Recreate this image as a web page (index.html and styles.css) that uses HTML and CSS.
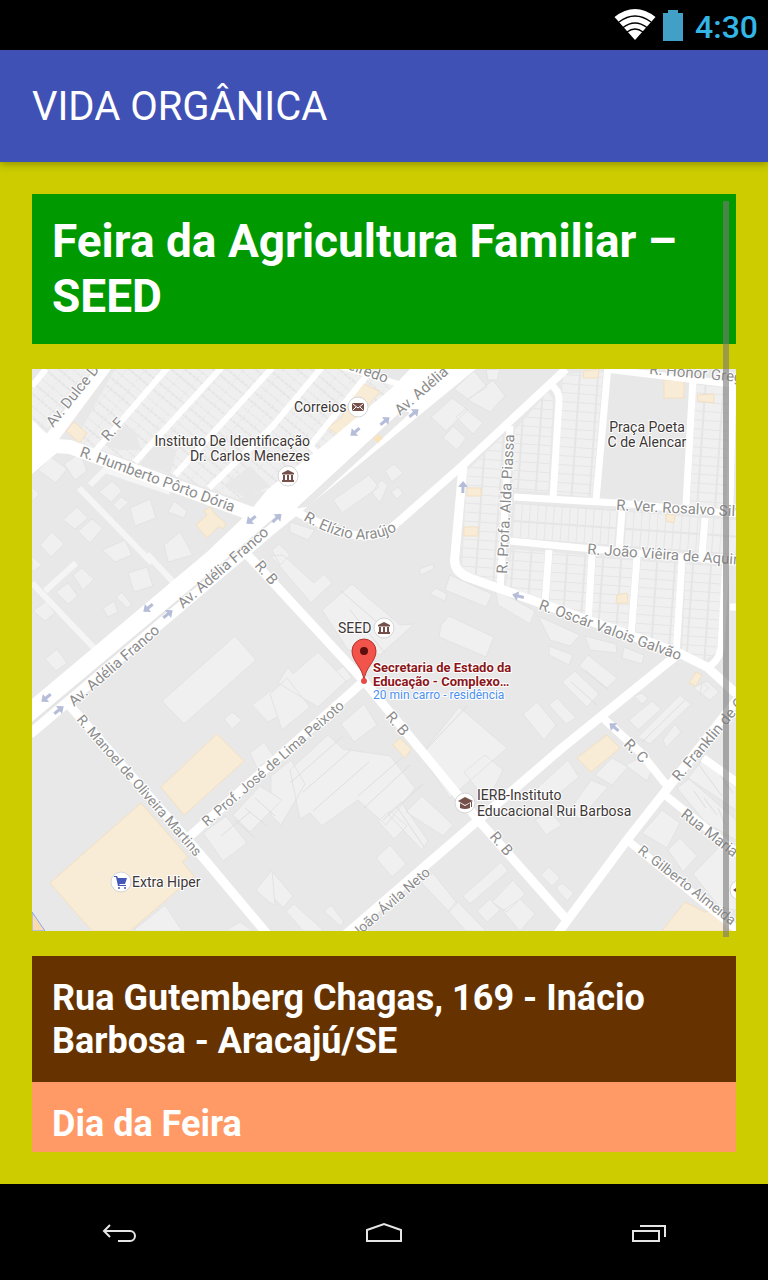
FILE: index.html
```html
<!DOCTYPE html>
<html lang="pt-BR">
<head>
<meta charset="utf-8">
<meta name="viewport" content="width=device-width, initial-scale=1">
<title>Vida Orgânica</title>
<link rel="stylesheet" href="styles.css">
</head>
<body>
<div class="status">
  <svg class="status-wifi" viewBox="0 0 42 32" aria-label="Wi-Fi">
    <path d="M21 31 0.500 8Q21-8 41.500 8Z" fill="#fff"/>
    <g fill="none" stroke="#000" stroke-width="1.500"><path d="M5 13Q21 1 37 13"/><path d="M9 18.500Q21 9.500 33 18.500"/><path d="M13 23Q21 17 29 23"/></g>
  </svg>
  <svg class="status-battery" viewBox="0 0 20 31" aria-label="Bateria"><path d="M0 3H5V0H15V3H20V31H0Z" fill="#429fc6"/></svg>
  <time class="status-time">4:30</time>
</div>
<header class="appbar"><h1 class="appbar-title">VIDA ORGÂNICA</h1></header>
<main class="page">
  <div class="scroller">
    <h2 class="fair-name">Feira da Agricultura Familiar – SEED</h2>
    <svg class="map" viewBox="32 369 704 562" role="img" aria-label="Mapa da feira">
      <defs>
        <pattern id="lots-nw" width="15" height="27" patternUnits="userSpaceOnUse" patternTransform="translate(110 365) rotate(40)">
          <rect width="15" height="27" fill="#efefef"/><path d="M0 0H15M0 9H15M0 18H15" stroke="#dcdcdc" stroke-dasharray="4 1"/><path d="M0 0V27" stroke="#e2e2e2" stroke-dasharray="3 2"/>
        </pattern>
        <pattern id="lots-col" width="18" height="9" patternUnits="userSpaceOnUse" patternTransform="translate(563 374) rotate(4)">
          <rect width="18" height="9" fill="#f0f0f0"/><path d="M0 0H16" stroke="#dadada"/><path d="M17 0V9" stroke="#e5e5e5" stroke-width="2"/>
        </pattern>
        <pattern id="lots-row" width="8" height="18" patternUnits="userSpaceOnUse" patternTransform="translate(514 504) rotate(4)">
          <rect width="8" height="18" fill="#f0f0f0"/><path d="M0 0V16" stroke="#dadada"/><path d="M0 17H8" stroke="#e5e5e5" stroke-width="2"/>
        </pattern>
        <path id="way" d="M-6-1.500H0V-5L6 0 0 5V1.500H-6Z" fill="#b6bdd8"/>
        <g id="museum" fill="#75504b"><path d="M-6-3 0-6 6-3V-1.500H-6ZM-5-1H-3V4H-5ZM-1-1H1V4H-1ZM3-1H5V4H3ZM-6 4H6V6H-6Z"/></g>
        <path id="elizio" d="M303 520Q357 552 396 531"/>
      </defs>
      <rect x="32" y="369" width="704" height="562" fill="#e8e8e8"/>
      <g fill="url(#lots-nw)"><path d="M32 382 44 369H92L48 429 32 423ZM115 369H350L398 384 268 490 238 499 75 441Z"/></g>
      <path d="M115 423 135 430 141 450 118 450 104 443ZM225 485 250 466 270 486 245 498ZM140 464 156 440 177 450 170 474Z" fill="#e8e8e8"/>
      <g fill="url(#lots-col)">
        <path d="M563 374 603 372 592 497 557 494ZM515 430 548 392 553 400 548 492 513 490ZM696 385 731 388 727 508 690 505ZM467 471 505 434 498 582 462 570ZM512 549 545 552 541 598 506 586ZM553 552 588 556 585 620 549 605ZM596 557 633 560 627 630 592 620ZM641 561 678 563 673 648 635 636ZM686 563 723 566 717 652 705 660 682 652Z"/>
      </g>
      <g fill="url(#lots-row)"><path d="M514 503 617 509 614 545 512 537ZM626 511 700 518 698 551 623 548ZM709 518 736 520V556L706 553Z"/></g>
      <g fill="#f0f0f0" stroke="#e3e3e3" stroke-width="1">
        <path d="M38 470 51 457 67 469 56 483ZM64 464 80 453 87 471 75 480ZM32 487 39 494 32 502ZM99 492 112 481 122 491 111 502ZM113 505 121 497 129 502 119 511ZM130 508 150 499 156 518 135 526ZM168 512 174 501 187 511 184 518ZM63 520 77 507 88 518 75 529ZM78 531 92 519 103 528 90 543ZM40 545 52 532 64 544 51 557ZM102 550 125 540 132 555 115 562ZM164 545 180 532 193 555 168 562ZM32 556 42 565 32 572ZM73 575 82 568 94 579 83 590ZM56 592 68 583 78 596 68 604ZM33 611 46 601 55 613 45 621ZM128 573 147 567 153 586 134 592ZM103 608 114 601 118 612 108 617ZM116 597 122 592 132 605 127 608ZM45 659 57 649 67 663 56 671ZM162 701 235 636 256 660 184 724ZM252 705 272 690 294 708 268 722ZM224 719 232 712 242 720 232 729Z"/>
        <path d="M333 500 369 475 379 487 342 513ZM372 493 381 480 388 485 380 503ZM385 471 394 464 403 473 392 482ZM391 492 398 487 403 493 397 499ZM290 522 315 530 308 540 290 532ZM272 550 279 544 290 555 280 565ZM431 417 452 398 468 410 446 431ZM456 417 466 409 483 423 473 434ZM443 438 453 426 466 438 457 450ZM454 389 474 371 487 387 468 399ZM468 400 493 380 505 396 490 412ZM486 370 500 369 497 380 488 380ZM271 556 283 555 314 583 324 574 332 583 311 603ZM322 610 352 584 400 625 414 624 380 655 370 650 348 650ZM323 680 343 666 352 678 330 690ZM441 625 449 616 494 637 486 657 439 637ZM430 594 436 588 447 594 445 601ZM445 590 450 575 492 594 486 607ZM419 569 433 564 434 569 421 575ZM495 589 535 611 530 624 498 605ZM538 616 580 635 570 646 550 640ZM549 646 573 655 569 665 549 655ZM585 636 616 644 617 653 590 650ZM624 647 644 655 642 664 622 658ZM562 682 575 671 599 694 587 707ZM579 666 588 655 617 678 607 688ZM523 714 537 702 556 725 544 740ZM549 705 557 698 576 718 566 724ZM629 720 652 701 661 709 638 730ZM634 696 642 693 648 699 642 704ZM638 737 680 695 691 704 650 744ZM663 740 675 724 681 732 666 748Z"/>
        <path d="M278 683 288 667 293 674 318 652 346 681 318 707ZM270 694 287 678 310 707 282 730ZM341 724 364 704 377 725 354 742ZM271 776 291 760 305 784 281 825 271 815ZM290 770 328 735 343 749 390 756 415 788 386 825 358 800 322 826 310 813 300 819ZM378 821 390 811 407 826 394 839ZM388 814 401 802 428 841 422 850ZM406 812 422 796 453 825 443 836ZM376 858 390 845 406 864 392 877ZM421 755 459 707 507 748 450 798ZM464 772 485 755 503 770 493 790 478 790ZM270 869 293 896 283 908 270 893ZM286 911 294 904 324 931H303ZM324 911 331 905 344 922 340 926ZM421 882 433 873 457 903 449 912ZM448 911 457 901 486 931H466ZM463 896 501 862 508 871 470 904ZM477 911 490 899 500 910 487 922ZM492 902 513 880 525 894 507 912ZM503 911 520 899 535 914 520 931ZM541 875 549 867 560 878 552 886ZM556 888 562 883 574 893 567 901Z"/>
        <path d="M537 788 568 760 579 777 550 801ZM571 808 591 780 608 787 579 820ZM595 775 612 758 628 767 612 785ZM625 765 640 758 653 768 647 781ZM642 833 662 810 680 823 667 848ZM668 850 680 838 697 856 683 872ZM693 874 724 842 736 848V910L720 908ZM677 788 689 779 736 820V840L705 822ZM688 778 705 757 736 782V810ZM535 820 550 812 562 825 546 835ZM203 833 226 816 247 843 223 861ZM233 815 260 786 282 800 250 832ZM256 890 272 870 275 905 270 903ZM135 929 165 905 182 931H136ZM225 931 240 922 253 931ZM250 753 264 742 274 757 257 768ZM702 682 709 688 700 696ZM693 688 707 681 719 692 710 700Z"/>
      </g>
      <g fill="none" stroke="#dedede"><path d="M350 610 385 653M378 623 340 590M290 783 343 736M303 792 350 751M313 811 369 762M358 796 403 757M364 808 410 765M383 820 423 784M397 807 424 847M421 755 467 706M571 682 597 705M585 670 608 690M642 742 685 700M221 836 250 812M235 820 255 838M245 808 267 826M255 798 275 816M694 791 706 808M704 798 717 815M718 808 725 824M699 765 722 796M711 762 733 793"/></g>
      <g fill="#f9ecd6" stroke="#f2dfc1">
        <path d="M66 431 74 422 87 433 80 443ZM196 525 207 515 204 511 210 507 215 514 226 524 223 529 219 526 207 538ZM328 428 341 418 354 395 364 384 380 392 340 436ZM467 488H481V496H467ZM464 527H478V536H464ZM584 371 599 369 598 378 583 378ZM664 380H684V398H664ZM697 395 714 394V403L698 401ZM666 514 675 515 674 523 666 521ZM617 595 627 593 628 603 616 603ZM689 683 696 672 702 675 696 686ZM577 758 607 735 620 748 591 772ZM393 745 400 738 411 749 405 758ZM161 787 217 734 244 761 184 815ZM50 883 141 803 188 857 182 862 194 876 130 931H92ZM662 931 685 902 705 912 710 911 728 924 732 931Z"/>
        <path d="M32 912 45 931H32Z" fill="#fadbb0" stroke="#83a7f2"/>
      </g>
      <g fill="none" stroke="#f5f5f5" stroke-width="6"><path d="M79 488 152 563M32 583 94 648M45 591 76 563M147 554 174 583M90 485 105 470 170 492"/></g>
      <g fill="none" stroke="#fff" stroke-width="7" stroke-linejoin="round">
        <path d="M32 386 46 369M92 455 168 367M135 462 222 367M175 475 272 368M209 488 272 427 322 367M320 456 310 446 368 374M340 366 402 385" stroke-width="6"/>
        <path d="M48 443 106 365" stroke-width="13"/>
        <path d="M30 444 70 447 170 484 255 515" stroke-width="14"/>
        <path d="M30 734 270 531 473 365" stroke-width="10"/>
        <path d="M288 508C330 528 368 551 397 523L463 465 566 369" stroke-width="8"/>
        <path d="M463 466 455 555Q452 572 470 578L677 652 707 667 740 697" stroke-width="9"/>
        <path d="M510 426 500 590M514 497 617 503 738 514M510 541 560 546 738 562M551 385Q559 390 559 400L553 498M608 366 596 500M693 378 686 505M606 369 738 385M622 511 619 550M705 518 702 555M549 550 545 603M592 555 588 625M637 557 631 637M682 560 676 655M726 560 721 648Q719 662 706 668M733 376 730 505M730 607H738"/>
        <path d="M677 655 562 748 345 935M740 696 667 789 627 840 555 937M243 550 364 681 480 822 566 919M70 706 200 854 268 935M190 836 364 681" stroke-width="9"/>
        <path d="M603 718 640 752 668 787M665 795 740 855M627 840 740 932M703 758 738 783" stroke-width="8"/>
      </g>
      <path d="M32 420 55 441 64 447 32 474ZM32 699 207 552 250 511 268 489 320 448 392 388 413 366H464L300 508 222 564 32 722Z" fill="#fff"/>
      <path d="M32 723 222 564 280 514M298 508 403 411" fill="none" stroke="#e5e5e5" stroke-width="2"/>
      <path d="M298 508 403 410 410 413 308 507Z" fill="#e8e8e8"/>
      <path d="M373 439 378 434 383 438 378 443Z" fill="#f9e3bd"/>

      <use href="#way" transform="translate(251 520) rotate(142)"/><use href="#way" transform="translate(277 518) rotate(-42)"/>
      <use href="#way" transform="translate(355 432) rotate(140)"/><use href="#way" transform="translate(385 421) rotate(-40)"/><use href="#way" transform="translate(414 413) rotate(-40)"/>
      <use href="#way" transform="translate(148 608) rotate(142)"/><use href="#way" transform="translate(168 614) rotate(-38)"/>
      <use href="#way" transform="translate(46 698) rotate(142)"/><use href="#way" transform="translate(59 710) rotate(-38)"/>
      <use href="#way" transform="translate(463 487) rotate(-88)"/><use href="#way" transform="translate(518 596) rotate(195)"/><use href="#way" transform="translate(614 727) rotate(220)"/>

      <g class="street">
        <text transform="translate(53 428) rotate(-51)">Av. Dulce D</text>
        <text transform="translate(108 442) rotate(-48)">R. F</text>
        <text transform="translate(79 456) rotate(20)">R. Humberto Pôrto Dória</text>
        <text transform="translate(347 369) rotate(20)">eiredo</text>
        <text transform="translate(400 416) rotate(-41)">Av. Adélia</text>
        <text><textPath href="#elizio">R. Elízio Araújo</textPath></text>
        <text transform="translate(183 609) rotate(-41)">Av. Adélia Franco</text>
        <text transform="translate(74 707) rotate(-41)">Av. Adélia Franco</text>
        <text transform="translate(254 566) rotate(49)">R. B</text>
        <text transform="translate(385 717) rotate(49)">R. B</text>
        <text transform="translate(489 837) rotate(49)">R. B</text>
        <text transform="translate(507 574) rotate(-87)">R. Profa. Alda Piassa</text>
        <text transform="translate(649 374) rotate(5)">R. Honor Grego</text>
        <text transform="translate(616 510) rotate(3)">R. Ver. Rosalvo Silva</text>
        <text transform="translate(587 554) rotate(4)">R. João Viêira de Aquino</text>
        <text transform="translate(538 609) rotate(20)">R. Oscár Valois Galvão</text>
        <text class="street-long" transform="translate(76 720) rotate(49)">R. Manoel de Oliveira Martins</text>
        <text class="street-long" transform="translate(207 827) rotate(-41)">R. Prof. José de Lima Peixoto</text>
        <text class="street-long" transform="translate(357 938) rotate(-41)">João Ávila Neto</text>
        <text transform="translate(623 745) rotate(45)">R. C</text>
        <text transform="translate(679 782) rotate(-50)">R. Franklin de O</text>
        <text transform="translate(680 816) rotate(38)">Rua Maria</text>
        <text class="street-long" transform="translate(637 852) rotate(38)">R. Gilberto Almeida</text>
      </g>
      <g fill="#fff" stroke="#d6d6d6"><circle cx="358" cy="407" r="10"/><circle cx="288" cy="476" r="10"/><circle cx="384" cy="628" r="10"/><circle cx="465" cy="803" r="10"/><circle cx="121" cy="882" r="10"/><circle cx="740" cy="890" r="10"/></g>
      <path d="M353 403H363L364 404V410L363 411H353L352 410V404Z" fill="#75504b"/><path d="M353 404 358 408 363 404M353 410 356 407M363 410 360 407" fill="none" stroke="#fff"/>
      <use href="#museum" transform="translate(288 476)"/><use href="#museum" transform="translate(384 628)"/>
      <path d="M458 801 465 797 473 801 465 805ZM460 803 465 806 470 803V808Q465 810 460 808ZM471 802H472V807H471Z" fill="#75504b"/>
      <path d="M114 876H117L118 878H127L125 884H119L120 885H126V886H118L116 877H114Z" fill="#4658b7"/><circle cx="119" cy="888" r="1" fill="#4658b7"/><circle cx="125" cy="888" r="1" fill="#4658b7"/>
      <path d="M733 890 736 888V892Z" fill="#75504b"/>
      <g class="place">
        <text x="294" y="412">Correios</text>
        <text x="310" y="446" text-anchor="end">Instituto De Identificação</text>
        <text x="310" y="461" text-anchor="end">Dr. Carlos Menezes</text>
        <text x="647" y="432" text-anchor="middle">Praça Poeta</text>
        <text x="647" y="447" text-anchor="middle">C de Alencar</text>
        <text x="338" y="633">SEED</text>
        <text x="477" y="800">IERB-Instituto</text>
        <text x="477" y="816">Educacional Rui Barbosa</text>
        <text x="132" y="887">Extra Hiper</text>
      </g>
      <path d="M364 681C363 667 352 662 352 651A12 12 0 0 1 376 651C376 662 365 667 364 681Z" fill="#f2544c" stroke="#b5322c"/><circle cx="364" cy="651" r="4" fill="#5c0f0c"/><circle cx="364" cy="681" r="3" fill="#ea4a45"/>
      <g class="target">
        <text x="373" y="672">Secretaria de Estado da</text>
        <text x="373" y="686">Educação - Complexo…</text>
        <text class="route" x="373" y="699">20 min carro - residência</text>
      </g>
    </svg>
    <div class="info address">Rua Gutemberg Chagas, 169 - Inácio Barbosa - Aracajú/SE</div>
    <div class="info day">Dia da Feira</div>
  </div>
  <div class="thumb"></div>
</main>
<nav class="navbar">
  <button class="nav-button" type="button" aria-label="Voltar"><svg viewBox="0 0 40 24"><path d="M10 3 4 9 10 15M4 9H30A5 5 0 0 1 30 19H18"/></svg></button>
  <button class="nav-button" type="button" aria-label="Início"><svg viewBox="0 0 40 24"><path d="M3 8 20 2 37 8V19H3Z"/></svg></button>
  <button class="nav-button" type="button" aria-label="Recentes"><svg viewBox="0 0 40 24"><path d="M5 9H31V19H5ZM12 4H37V15"/></svg></button>
</nav>
</body>
</html>
```
FILE: styles.css
```css
* { box-sizing: border-box; }
body {
  margin: 0;
  height: 100vh;
  display: flex;
  flex-direction: column;
  background: #cccc00;
  color: #fff;
  font-family: Roboto, "Liberation Sans", sans-serif;
}
.status {
  flex: none;
  height: 50px;
  padding: 0 10px;
  display: flex;
  align-items: center;
  justify-content: flex-end;
  background: #000;
}
.status-wifi { width: 42px; height: 32px; margin-right: 7px; }
.status-battery { width: 20px; height: 31px; margin-right: 12px; }
.status-time { color: #33b5e5; font-size: 32px; font-weight: 500; line-height: 50px; padding-top: 4px; }
.appbar {
  flex: none;
  height: 112px;
  padding: 2px 32px 0;
  display: flex;
  align-items: center;
  background: #3f51b5;
  box-shadow: 0 2px 8px rgba(0, 0, 0, 0.3);
  z-index: 1;
}
.appbar-title { margin: 0; font-size: 40px; font-weight: 400; line-height: 48px; }
.page {
  position: relative;
  flex: 1;
  min-height: 0;
  padding: 32px;
}
.scroller { height: 100%; overflow: hidden; }
.fair-name {
  margin: 0 0 25px;
  padding: 20px;
  background: #009900;
  font-size: 46px;
  font-weight: 700;
  line-height: 55px;
}
.map { display: block; width: 100%; margin-bottom: 25px; }
.street { font-size: 15px; fill: #8c8c8c; stroke: #fff; stroke-width: 2px; paint-order: stroke; }
.street-long { font-size: 14px; }
.place { font-size: 14px; fill: #3d3736; stroke: #fff; stroke-width: 2px; paint-order: stroke; }
.target { font-size: 13px; font-weight: 700; fill: #8c1519; stroke: #fff; stroke-width: 2px; paint-order: stroke; }
.route { font-size: 12px; font-weight: 400; fill: #4a90ee; }
.info { padding: 21px 20px 19px; font-size: 36px; font-weight: 700; line-height: 43px; }
.address { background: #663300; }
.day { background: #ff9966; }
.thumb {
  position: absolute;
  top: 39px;
  right: 39px;
  width: 6px;
  height: 72%;
  background: rgba(120, 120, 120, 0.6);
}
.navbar {
  flex: none;
  height: 96px;
  padding: 6px 80px 0;
  display: flex;
  align-items: center;
  justify-content: space-between;
  background: #000;
}
.nav-button { width: 80px; height: 90px; padding: 0; border: 0; background: none; }
.nav-button svg { width: 40px; height: 24px; fill: none; stroke: #e6e6e6; stroke-width: 2; }
```
